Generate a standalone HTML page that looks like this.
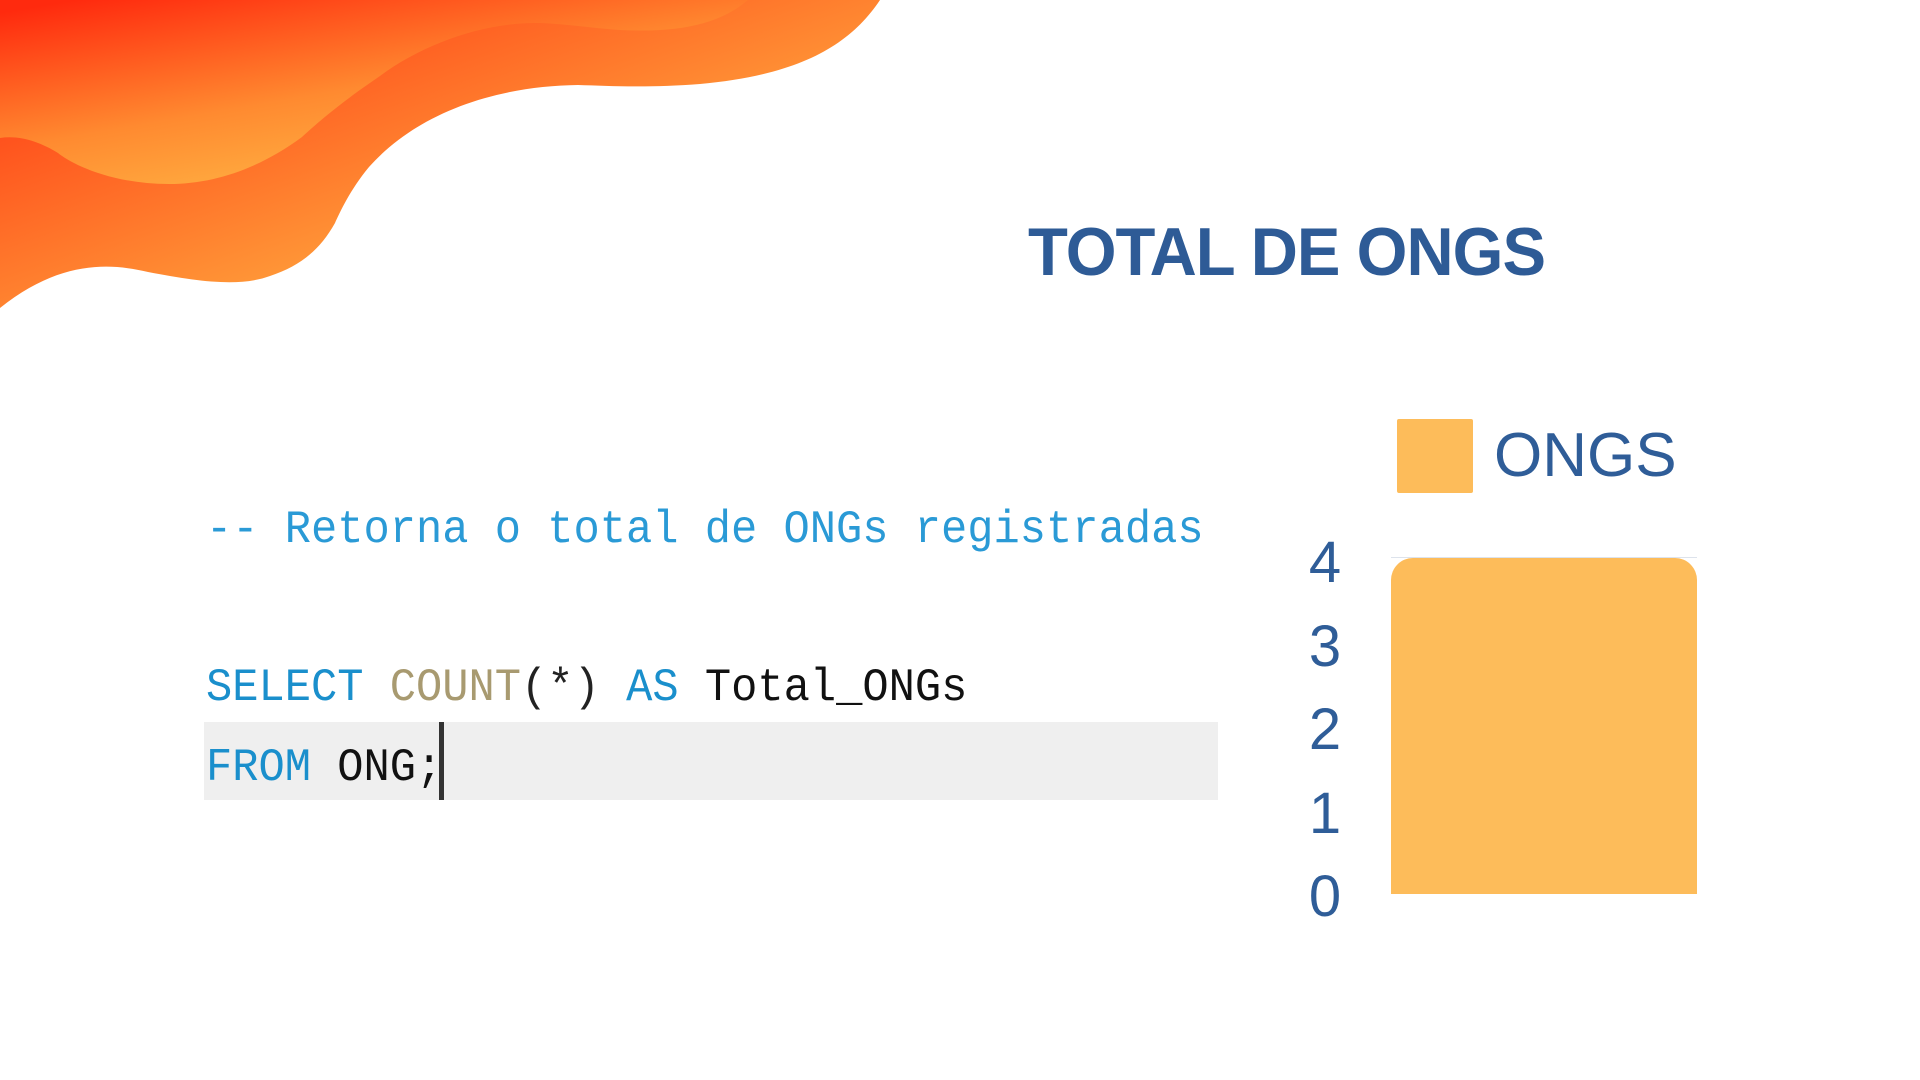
<!DOCTYPE html>
<html><head><meta charset="utf-8"><style>
html,body{margin:0;padding:0;}
body{width:1920px;height:1080px;position:relative;background:#fff;overflow:hidden;font-family:"Liberation Sans",sans-serif;}
.abs{position:absolute;}
.code{font-family:"Liberation Mono",monospace;font-size:46px;white-space:pre;line-height:1;transform:scaleX(0.951);transform-origin:left top;}
.num{position:absolute;left:1300px;width:50px;text-align:center;color:#2f5d98;font-size:58px;line-height:1;}
</style></head><body>
<svg class="abs" style="left:0;top:0" width="960" height="340" viewBox="0 0 960 340">
<defs>
<linearGradient id="g1" x1="0" y1="0" x2="1" y2="1">
<stop offset="0" stop-color="#ff2a0e"/><stop offset="0.55" stop-color="#ff8c33"/><stop offset="1" stop-color="#ffd850"/></linearGradient>
<linearGradient id="g2" x1="0.1" y1="0" x2="0.8" y2="1">
<stop offset="0" stop-color="#ff2a0e"/><stop offset="0.5" stop-color="#ff8a30"/><stop offset="1" stop-color="#ffc24a"/></linearGradient>
</defs>
<path d="M0,0 L880,0 C850,45 800,75 700,84 C650,88 610,86 578,85 C500,86 420,110 369,167 C350,190 340,212 335,223 C320,250 300,266 270,276 C240,287 200,282 148,272 C110,263 60,260 0,308 Z" fill="url(#g1)"/>
<path d="M0,0 L748,0 C720,24 680,33 620,30 C590,28 560,23 535,23 C480,23 420,46 380,76 C340,103 315,125 302,137 C260,168 215,184 169,184 C110,184 70,163 58,153 C40,142 20,135 0,138 Z" fill="url(#g2)"/>
</svg>
<div class="abs" style="left:1028px;top:218px;font-weight:bold;font-size:68px;color:#2e5b96;letter-spacing:-1px;transform:scaleX(0.96);transform-origin:left top;line-height:1;">TOTAL DE ONGS</div>
<div class="abs code" style="left:206px;top:507px;color:#2a9ad6;">-- Retorna o total de ONGs registradas</div>
<div class="abs" style="left:204px;top:722px;width:1014px;height:78px;background:#efefef;"></div>
<div class="abs code" style="left:206px;top:665px;"><span style="color:#1a8fcc">SELECT</span> <span style="color:#a89a70">COUNT</span><span style="color:#222">(*)</span> <span style="color:#1a8fcc">AS</span> <span style="color:#111">Total_ONGs</span></div>
<div class="abs code" style="left:206px;top:745px;"><span style="color:#1a8fcc">FROM</span> <span style="color:#111">ONG;</span></div>
<div class="abs" style="left:439px;top:722px;width:5px;height:78px;background:#333;"></div>
<div class="abs" style="left:1397px;top:419px;width:76px;height:74px;background:#fdbc5a;border-radius:2px;"></div>
<div class="abs" style="left:1494px;top:425px;font-size:62px;color:#2f5d98;line-height:1;">ONGS</div>
<div class="abs" style="left:1391px;top:557px;width:306px;height:1px;background:#dde3ec;"></div>
<div class="abs" style="left:1391px;top:558px;width:306px;height:336px;background:#fdbc5a;border-radius:22px 22px 0 0;"></div>
<div class="num" style="top:534px">4</div>
<div class="num" style="top:618px">3</div>
<div class="num" style="top:701px">2</div>
<div class="num" style="top:785px">1</div>
<div class="num" style="top:868px">0</div>
</body></html>
